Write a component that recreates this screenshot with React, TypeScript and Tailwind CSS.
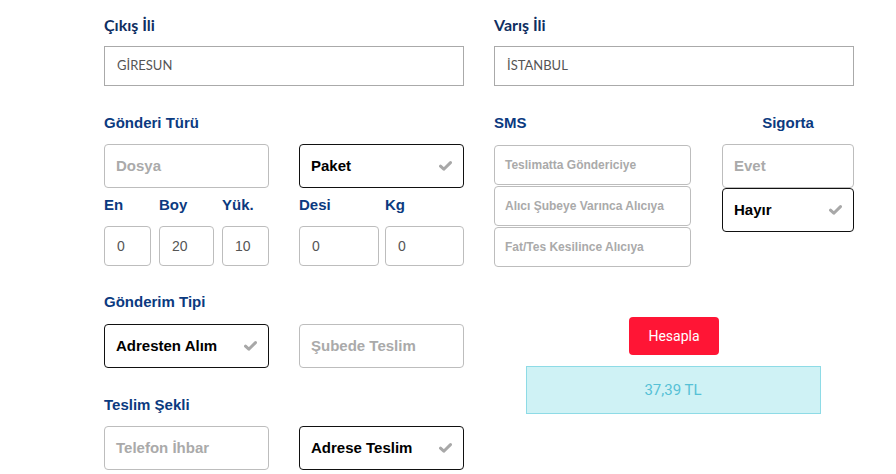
import React from "react";

const lato = "font-['Lato','Liberation_Sans',sans-serif]";
const arial = "font-['Liberation_Sans',Arial,sans-serif]";

const Check = () => (
  <svg width="13" height="10" viewBox="0 0 13 10" className="shrink-0">
    <path
      d="M1.5 5.2 L4.8 8.2 L11.5 1.6"
      fill="none"
      stroke="#a8a8a8"
      strokeWidth="3"
      strokeLinecap="round"
      strokeLinejoin="round"
    />
  </svg>
);

const Option = ({
  label,
  selected,
  className = "",
}: {
  label: string;
  selected?: boolean;
  className?: string;
}) => (
  <div
    className={`flex h-[44px] items-center justify-between rounded-[4px] border pl-[11px] pr-[11px] ${arial} text-[15px] font-bold ${
      selected ? "border-[#111] text-black" : "border-[#bdbdbd] text-[#aaa]"
    } ${className}`}
  >
    <span>{label}</span>
    {selected && <Check />}
  </div>
);

const Label = ({ children, className = "" }: { children: React.ReactNode; className?: string }) => (
  <div className={`${arial} text-[15px] font-bold leading-[20px] text-[#0b3a80] ${className}`}>{children}</div>
);

const SmallInput = ({ value, w }: { value: string; w: string }) => (
  <div
    className={`flex h-[40px] items-center rounded-[4px] border border-[#bdbdbd] pl-[12px] ${arial} text-[14px] text-[#555] ${w}`}
  >
    {value}
  </div>
);

const Dim = ({ label, value, w }: { label: string; value: string; w: string }) => (
  <div className="flex flex-col">
    <div className={`${arial} text-[15px] font-bold leading-[20px] text-[#0b3a80]`}>{label}</div>
    <div className="mt-[11px]">
      <SmallInput value={value} w={w} />
    </div>
  </div>
);

const CityField = ({ label, value }: { label: string; value: string }) => (
  <div className="flex flex-col">
    <div className={`${lato} text-[16px] font-bold leading-[24px] text-[#102f62]`}>{label}</div>
    <div
      className={`mt-[9px] flex h-[40px] items-center border border-[#aaa] pl-[12px] ${lato} text-[13px] text-[#555]`}
    >
      {value}
    </div>
  </div>
);

const SmsOption = ({ label }: { label: string }) => (
  <div
    className={`flex h-[40px] items-center rounded-[4px] border border-[#bdbdbd] pl-[10px] ${arial} text-[12px] font-bold text-[#aaa]`}
  >
    {label}
  </div>
);

export default function App() {
  return (
    <div className="min-h-[474px] w-full bg-white">
      <div className="flex gap-[30px] pl-[104px] pt-[13px]">
        {/* sol kolon */}
        <div className="flex w-[360px] flex-col">
          <CityField label="Çıkış İli" value="GİRESUN" />

          <Label className="mt-[27px]">Gönderi Türü</Label>
          <div className="mt-[11px] flex gap-[30px]">
            <Option label="Dosya" className="w-[165px]" />
            <Option label="Paket" selected className="w-[165px]" />
          </div>

          <div className="mt-[7px] flex gap-[30px]">
            <div className="flex w-[165px] gap-[8px]">
              <Dim label="En" value="0" w="w-[47px]" />
              <Dim label="Boy" value="20" w="w-[55px]" />
              <Dim label="Yük." value="10" w="w-[47px]" />
            </div>
            <div className="flex w-[165px] gap-[6px]">
              <Dim label="Desi" value="0" w="w-[80px]" />
              <Dim label="Kg" value="0" w="w-[79px]" />
            </div>
          </div>

          <Label className="mt-[26px]">Gönderim Tipi</Label>
          <div className="mt-[12px] flex gap-[30px]">
            <Option label="Adresten Alım" selected className="w-[165px]" />
            <Option label="Şubede Teslim" className="w-[165px]" />
          </div>

          <Label className="mt-[27px]">Teslim Şekli</Label>
          <div className="mt-[11px] flex gap-[30px]">
            <Option label="Telefon İhbar" className="w-[165px]" />
            <Option label="Adrese Teslim" selected className="w-[165px]" />
          </div>
        </div>

        {/* sağ kolon */}
        <div className="flex w-[360px] flex-col">
          <CityField label="Varış İli" value="İSTANBUL" />

          <div className="mt-[27px] flex gap-[31px]">
            <div className="flex w-[197px] flex-col">
              <Label>SMS</Label>
              <div className="mt-[12px] flex flex-col gap-[1px]">
                <SmsOption label="Teslimatta Göndericiye" />
                <SmsOption label="Alıcı Şubeye Varınca Alıcıya" />
                <SmsOption label="Fat/Tes Kesilince Alıcıya" />
              </div>
            </div>
            <div className="flex w-[132px] flex-col">
              <Label className="text-center">Sigorta</Label>
              <div className="mt-[11px] flex flex-col">
                <Option label="Evet" />
                <Option label="Hayır" selected />
              </div>
            </div>
          </div>

          <div className="mt-[50px] flex flex-col items-center pr-[2px]">
            <button className="ml-[2px] h-[38px] w-[90px] rounded-[4px] bg-[#ff1535] font-['Roboto',sans-serif] text-[14px] text-white">
              Hesapla
            </button>
            <div className="mt-[11px] flex h-[48px] w-[295px] items-center justify-center border border-[#8edbe6] bg-[#cff2f5] font-['Roboto',sans-serif] text-[15px] text-[#56c1d6]">
              37,39 TL
            </div>
          </div>
        </div>
      </div>
    </div>
  );
}
